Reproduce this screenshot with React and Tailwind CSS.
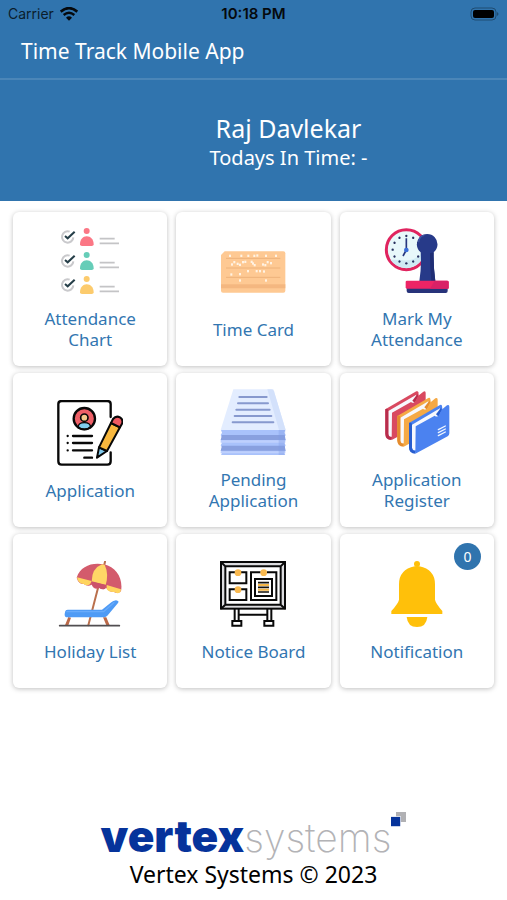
import React from "react";

const people = [
  { y: 0, color: "#fb7785" },
  { y: 72, color: "#66cdb8" },
  { y: 144, color: "#fccb6d" },
];

function AttendanceChartIcon() {
  return (
    <svg viewBox="142 69 198 198" className="size-[66px]" aria-hidden="true">
      {people.map(({ y, color }) => (
        <g key={color} transform={`translate(0 ${y})`}>
          <path d="M180 80 A17 17 0 1 0 191 97" fill="none" stroke="#c9c9cc" strokeWidth="6" />
          <path d="M166 93 L174 100 L195 80" fill="none" stroke="#263f49" strokeWidth="6" />
          <circle cx="231" cy="78" r="9" fill={color} />
          <path d="M211 118 C211 103 220 94 231 94 C243 94 252 103 252 118 Q252 123 246 123 H217 Q211 123 211 118Z" fill={color} />
          <path d="M270 101 H315 M270 115 H328" stroke="#c4c4c6" strokeWidth="5" />
        </g>
      ))}
    </svg>
  );
}

const punches = [
  [174, 150], [208, 150], [229, 150], [247, 150], [256, 149], [282, 150], [312, 150],
  [180, 176], [187, 169], [197, 174], [204, 177], [213, 169], [220, 168], [239, 168], [243, 173], [248, 178],
  [273, 176], [280, 178], [287, 169], [297, 172],
  [228, 196], [254, 196], [264, 196], [276, 197], [178, 206], [204, 205], [204, 224], [282, 224],
];

function TimeCardIcon() {
  return (
    <svg viewBox="144 100 198 198" className="size-[66px]" aria-hidden="true">
      <path d="M158 137 H334 Q340 137 340 143 V255 Q340 261 334 261 H153 Q147 261 147 255 V148Z" fill="#fec993" />
      <path d="M147 236 H340 V248 H147Z" fill="#f4b780" />
      <path d="M162 158 H325 M162 187 H325 M162 215 H325" stroke="#edb27b" strokeWidth="3" />
      {punches.map(([x, y]) => (
        <rect key={`${x}-${y}`} x={x - 3} y={y - 3} width="6" height="7" fill="#fff3e4" />
      ))}
    </svg>
  );
}

function MarkAttendanceIcon() {
  const hours = [0, 1, 2, 3, 4, 5, 6, 7, 8, 9, 10, 11];
  return (
    <svg viewBox="144 69 198 198" className="size-[66px]" aria-hidden="true">
      <circle cx="211" cy="134" r="60" fill="#e8f8fb" stroke="#e0245f" strokeWidth="9" />
      <path d="M163 164 A57 57 0 0 0 257 164 L260 140 Q235 174 190 164Z" fill="#cfeaf4" />
      {hours.map((h) => (
        <circle key={h} cx="211" cy="93" r="3.5" fill="#28305f" transform={`rotate(${h * 30} 211 134)`} />
      ))}
      <path d="M211 100 V135 L201 153" fill="none" stroke="#27377e" strokeWidth="5" />
      <circle cx="211" cy="135" r="7" fill="#3a6dd8" />
      <path d="M254 142 A31 31 0 1 1 293 142 Q292 185 298 229 H250 Q257 185 254 142Z" fill="#273a89" />
      <path d="M248 112 Q249 93 265 91" fill="none" stroke="#4056a5" strokeWidth="4" />
      <path d="M282 145 Q282 190 286 228 H298 Q292 185 293 142Z" fill="#1f2e74" />
      <path d="M212 248 H335 V258 Q335 264 329 264 H218 Q212 264 212 258Z" fill="#27337a" />
      <rect x="209" y="227" width="129" height="24" rx="4" fill="#ed2465" />
      <path d="M296 227 H334 Q338 227 338 232 V251 H282Z" fill="#d92166" />
    </svg>
  );
}

function ApplicationIcon() {
  return (
    <svg viewBox="142 95 198 198" className="size-[66px]" aria-hidden="true">
      <g fill="none" stroke="#080808" strokeWidth="7" strokeLinecap="round" strokeLinejoin="round">
        <path d="M303 146 V107 Q303 98 293 98 H156 Q146 98 146 107 V279 Q146 289 156 289 H293 Q303 289 303 279 V252" />
        <path d="M190 203 H247 M190 224 H247 M190 246 H247 M224 268 H247" />
        <path d="M174 203h.1 M174 224h.1 M174 246h.1" />
      </g>
      <circle cx="224" cy="151" r="32" fill="#ee6067" />
      <path d="M205 178 Q205 163 224 163 Q243 163 243 178 Q224 190 205 178Z" fill="#80cdee" stroke="#080808" strokeWidth="4" />
      <circle cx="224" cy="148" r="11" fill="#f4c98b" stroke="#080808" strokeWidth="5" />
      <circle cx="224" cy="151" r="32" fill="none" stroke="#080808" strokeWidth="7" />
      <g stroke="#080808" strokeWidth="6" strokeLinejoin="round">
        <path d="M268 237 L292 248 L262 268Z" fill="#7fc8ea" />
        <path d="M268 237 L304 164 L331 177 L292 248Z" fill="#f8b83e" />
        <path d="M304 164 L310 152 Q319 141 331 147 Q342 154 337 166 L331 177Z" fill="#ef5a62" />
      </g>
      <path d="M260 270 L263 258 L271 264Z" fill="#080808" />
    </svg>
  );
}

function PendingIcon() {
  return (
    <svg viewBox="144 63 198 198" className="size-[66px]" aria-hidden="true">
      <path d="M184 64 H304 L341 186 H146Z" fill="#e3edff" />
      <path d="M286 64 H298 Q304 64 306 70 L341 186 H321Z" fill="#d3e1fb" />
      <path d="M147 186 H340 L337 194 L341 201 L337 209 L341 216 L337 224 L341 232 L337 240 L341 248 L337 254 L340 262 H147 L150 254 L146 247 L150 239 L146 232 L150 224 L146 216 L150 209 L146 201 L150 194Z" fill="#a9c2fb" />
      <path d="M150 201 H338 L341 216 H146Z M150 233 H338 L341 248 H146Z" fill="#89a0df" />
      <path d="M146 217 H340 V224 H146Z M146 250 H340 V256 H146Z" fill="#bed0fd" />
      <path d="M320 186 H340 L337 262 H320Z" fill="#7e9ce4" opacity=".35" />
      <path d="M202 87 H284 M198 106 H288 M193 125 H293 M188 144 H298 M182 163 H304" stroke="#8799ce" strokeWidth="6" strokeLinecap="round" />
    </svg>
  );
}

const binders = [
  { x: -71, y: -41, main: "#d94960", dark: "#b72d4c" },
  { x: -35, y: -21, main: "#f5a945", dark: "#e48b2e" },
  { x: 0, y: 0, main: "#4b82f0", dark: "#285dce" },
];

function RegisterIcon() {
  return (
    <svg viewBox="144 63 198 198" className="size-[66px]" aria-hidden="true">
      {binders.map(({ x, y, main, dark }) => (
        <g key={main} transform={`translate(${x} ${y})`}>
          <path d="M219 165 L312 111 Q317 109 318 114 L330 202 L236 255 Q219 253 219 238Z" fill={main} />
          <path d="M228 170 L312 121 L316 130 L310 194 L240 247 Q228 249 228 238Z" fill="#f7f8fd" />
          <path d="M219 165 Q222 161 228 167 V239 Q229 249 238 248 V257 Q219 257 219 238Z" fill={dark} />
          <path d="M300 139 L315 119 L318 127 L308 146Z" fill={dark} />
          <path d="M239 175 L296 143 Q304 149 309 141 L317 125 L333 112 Q340 108 340 116 V196 Q340 202 335 205 L238 257Z" fill={main} />
        </g>
      ))}
      <path d="M307 185 L328 174 M307 194 L328 183 M307 203 L328 192" stroke="#eef5ff" strokeWidth="4" strokeLinecap="round" />
    </svg>
  );
}

function HolidayIcon() {
  return (
    <svg viewBox="142 93 198 198" className="size-[66px]" aria-hidden="true">
      <path d="M286 95 L283 108 M265 174 L236 286" stroke="#ba704d" strokeWidth="6" strokeLinecap="round" />
      <path d="M201 143 C212 108 247 96 283 103 C320 112 341 145 334 184 Q324 193 313 186 Q300 188 290 174 Q281 181 269 174 Q253 181 246 164 Q234 171 222 162 Q207 163 201 143Z" fill="#d35b6c" />
      <path d="M277 103 Q246 115 246 155 L288 165 Q298 132 285 104Z" fill="#ffd766" />
      <path d="M202 142 L246 153 L241 163 Q231 169 222 162 Q205 162 202 142Z M291 165 L334 178 Q334 190 323 190 L313 186 Q297 187 291 177Z" fill="#ffd55f" />
      <path d="M246 154 L290 165 L285 177 Q275 179 269 174 Q246 176 246 154Z" fill="#cb536b" />
      <path d="M176 261 L184 263 L176 286 H166Z M280 262 H290 L300 286 H290Z" fill="#bb6948" />
      <path d="M167 243 Q169 239 175 239 H277 L305 217 Q310 212 319 211 Q330 213 325 219 L293 257 Q288 262 280 262 H170 Q162 260 167 243Z" fill="#4f9bf5" />
      <path d="M170 245 H282 L314 217" fill="none" stroke="#69abfb" strokeWidth="4" />
      <path d="M150 287 H329" stroke="#514e51" strokeWidth="5" strokeLinecap="round" />
    </svg>
  );
}

function NoticeBoardIcon() {
  return (
    <svg viewBox="144 93 198 198" className="size-[66px]" aria-hidden="true">
      <path d="M147 96 H339 V236 H147Z M160 109 V224 H326 V109Z" fill="#dcdcdf" fillRule="evenodd" />
      <g fill="none" stroke="#090909" strokeWidth="6">
        <rect x="147" y="96" width="192" height="140" />
        <path d="M160 109 H326 V224 H160Z M147 96 L160 109 M339 96 L326 109 M147 236 L160 224 M339 236 L326 224" />
        <path d="M191 127 H173 V160 H223 V127 H206 M191 178 H173 V210 H223 V178 H206" />
        <path d="M266 127 H237 V210 H313 V127 H285" />
        <rect x="249" y="147" width="51" height="51" />
        <path d="M188 236 V270 M200 236 V270 M286 236 V270 M298 236 V270 M200 254 H286" />
        <path d="M181 273 H208 V287 H181Z M277 273 H304 V287 H277Z" />
      </g>
      <path d="M258 158 H291 M258 172 H291 M258 186 H291" stroke="#15120b" strokeWidth="5" />
      <path d="M258 165 H291 M258 179 H291" stroke="#f5b748" strokeWidth="6" />
      <g fill="#f9b94f">
        <circle cx="198" cy="128" r="10" />
        <circle cx="275" cy="128" r="10" />
        <circle cx="198" cy="179" r="10" />
      </g>
    </svg>
  );
}

function BellIcon() {
  return (
    <svg viewBox="144 93 198 198" className="size-[66px]" aria-hidden="true">
      <g fill="#ffc00a">
        <circle cx="243" cy="102" r="9" />
        <path d="M236 109 H250 Q297 119 297 163 V209 Q299 220 319 243 V252 H166 V243 Q187 220 189 209 V163 Q189 119 236 109Z" />
        <path d="M212 261 H274 Q271 291 243 291 Q215 291 212 261Z" />
      </g>
    </svg>
  );
}

const tiles = [
  { label: "Attendance Chart", Icon: AttendanceChartIcon },
  { label: "Time Card", Icon: TimeCardIcon },
  { label: "Mark My Attendance", Icon: MarkAttendanceIcon },
  { label: "Application", Icon: ApplicationIcon },
  { label: "Pending Application", Icon: PendingIcon },
  { label: "Application Register", Icon: RegisterIcon },
  { label: "Holiday List", Icon: HolidayIcon },
  { label: "Notice Board", Icon: NoticeBoardIcon },
  { label: "Notification", Icon: BellIcon, count: 0 },
];

function Tile({ label, Icon, count }) {
  return (
    <button
      type="button"
      className="relative flex min-h-[154px] flex-col items-center justify-center gap-[14px] rounded-md bg-white px-5 text-[#3276b1] shadow-[0_1px_5px_rgba(0,0,0,0.25)]"
    >
      <Icon />
      <span className="text-[17px] leading-[21px]">{label}</span>
      {count !== undefined && (
        <span className="absolute right-[13px] top-[9px] flex size-[27px] items-center justify-center rounded-full bg-[#3074ae] text-sm text-white">
          {count}
        </span>
      )}
    </button>
  );
}

function StatusBar() {
  return (
    <div className="grid h-7 grid-cols-3 items-center px-2 font-['Inter',sans-serif] text-sm text-[#0b1d2c]">
      <div className="flex items-center gap-1.5">
        <span>Carrier</span>
        <svg viewBox="0 0 54 42" className="h-[14px] w-[18px]" fill="none" stroke="#05090d" aria-hidden="true">
          <path d="M2 14 Q27 -7 52 14" strokeWidth="8" />
          <path d="M11 24 Q27 10 43 24" strokeWidth="7" />
          <path d="M18 32 Q27 24 36 32 L27 41Z" fill="#05090d" stroke="none" />
        </svg>
      </div>
      <span className="text-center text-[15px] font-semibold text-[#05090d]">10:18 PM</span>
      <svg viewBox="0 0 30 14" className="h-[14px] w-[30px] justify-self-end" aria-hidden="true">
        <rect x="2" y="1" width="25" height="12" rx="4" fill="none" stroke="#1f4c72" />
        <rect x="4" y="3" width="21" height="8" rx="2" fill="#000" />
        <path d="M28 5 Q31 7 28 9Z" fill="#1f4c72" />
      </svg>
    </div>
  );
}

export default function App() {
  return (
    <div className="flex min-h-screen flex-col bg-white font-['Noto_Sans',sans-serif]">
      <header className="bg-[#3074ae] text-white">
        <StatusBar />
        <div className="flex h-[52px] items-center border-b-2 border-[#4b86b8] px-[21px] pb-1">
          <h1 className="text-[21px] leading-7">Time Track Mobile App</h1>
        </div>
        <div className="flex h-[121px] flex-col items-center justify-center pl-[70px] pt-0.5 text-center">
          <h2 className="text-[25px] leading-8">Raj Davlekar</h2>
          <p className="text-[20px] leading-7">Todays In Time: -</p>
        </div>
      </header>

      <main className="grid grid-cols-3 gap-x-[9px] gap-y-[7px] px-[13px] pt-[11px]">
        {tiles.map((tile) => (
          <Tile key={tile.label} {...tile} />
        ))}
      </main>

      <footer className="mt-auto flex flex-col items-center pb-3.5 pt-8">
        <div className="flex items-start font-['Inter',sans-serif]">
          <p className="text-[44px] leading-[48px]">
            <span className="font-black text-[#06339b]">vertex</span>
            <span className="text-[39px] font-extralight text-[#b3b3b6]">systems</span>
          </p>
          <svg viewBox="0 0 45 45" className="size-[15px]" aria-hidden="true">
            <rect x="15" width="30" height="30" fill="#b1b1b4" />
            <rect x="-1" y="14" width="30" height="30" fill="#06339b" stroke="#fff" strokeWidth="2" />
          </svg>
        </div>
        <p className="text-[23px] leading-6 text-black">Vertex Systems © 2023</p>
      </footer>
    </div>
  );
}
